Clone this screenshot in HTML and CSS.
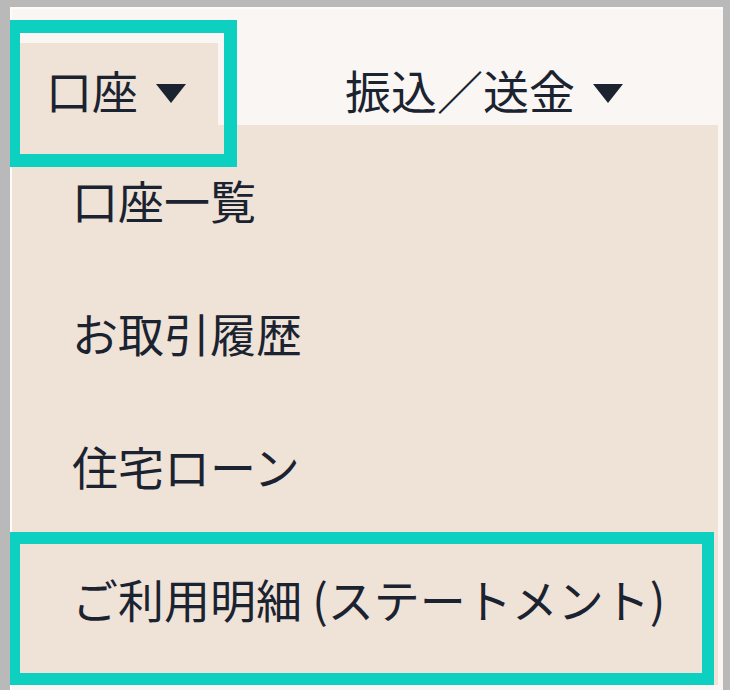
FILE: index.html
```html
<!DOCTYPE html>
<html lang="ja">
  <head>
    <meta charset="UTF-8">
    <meta name="viewport" content="width=device-width, initial-scale=1.0">
    <title>口座メニュー</title>
    <link rel="stylesheet" href="styles.css">
  </head>

  <body>
    <div class="panel">
      <nav class="nav">
        <div class="nav-item nav-item-open">口座<span class="caret"></span></div>
        <div class="nav-item nav-item-transfer">振込／送金<span class="caret"></span></div>
      </nav>

      <ul class="menu">
        <li class="menu-item">口座一覧</li>
        <li class="menu-item">お取引履歴</li>
        <li class="menu-item">住宅ローン</li>
        <li class="menu-item">ご利用明細 (ステートメント)</li>
      </ul>
    </div>

    <!-- highlight frames drawn over the screenshot -->
    <div class="mark mark-tab"></div>
    <div class="mark mark-statement"></div>
  </body>
</html>
```

FILE: styles.css
```css
body {
  margin: 0;
  width: 730px;
  height: 690px;
  padding: 7px 7px 0 10px;
  box-sizing: border-box;
  background: #b9b9b9;
  font-family: "Noto Sans CJK JP", "Noto Sans", sans-serif;
  color: #1b2330;
  overflow: hidden;
  position: relative;
}

.panel {
  height: 683px;
  box-sizing: border-box;
  background: #f9f6f3;
  border-top: 2px solid #fdfcfb;
  border-left: 2px solid #fdfcfb;
  padding-right: 5px;
}

.nav {
  display: flex;
  padding-top: 34px;
}

.nav-item {
  height: 82px;
  box-sizing: border-box;
  padding: 10px 0 0 34px;
  display: flex;
  align-items: center;
  gap: 18px;
  font-size: 46px;
  line-height: 1;
  white-space: nowrap;
  flex-shrink: 0;
}

.nav-item-open {
  width: 206px;
  background: #efe2d7;
}

.nav-item-transfer {
  margin-left: 93px;
}

.caret {
  width: 0;
  height: 0;
  border-left: 15px solid transparent;
  border-right: 15px solid transparent;
  border-top: 19px solid #1b2330;
  margin-top: 8px;
}

.menu {
  list-style: none;
  margin: 0;
  padding: 8px 0 0;
  height: 560px;
  box-sizing: border-box;
  background: #efe2d7;
}

.menu-item {
  height: 133px;
  line-height: 133px;
  padding-left: 60px;
  font-size: 46px;
  white-space: nowrap;
}

.mark {
  position: absolute;
  border: 12px solid #0dd0c1;
  border-left-width: 10px;
  box-sizing: border-box;
}

.mark-tab {
  left: 10px;
  top: 20px;
  width: 227px;
  height: 147px;
  border-width: 13px 13px 13px 10px;
}

.mark-statement {
  left: 10px;
  top: 532px;
  width: 704px;
  height: 153px;
}
```
